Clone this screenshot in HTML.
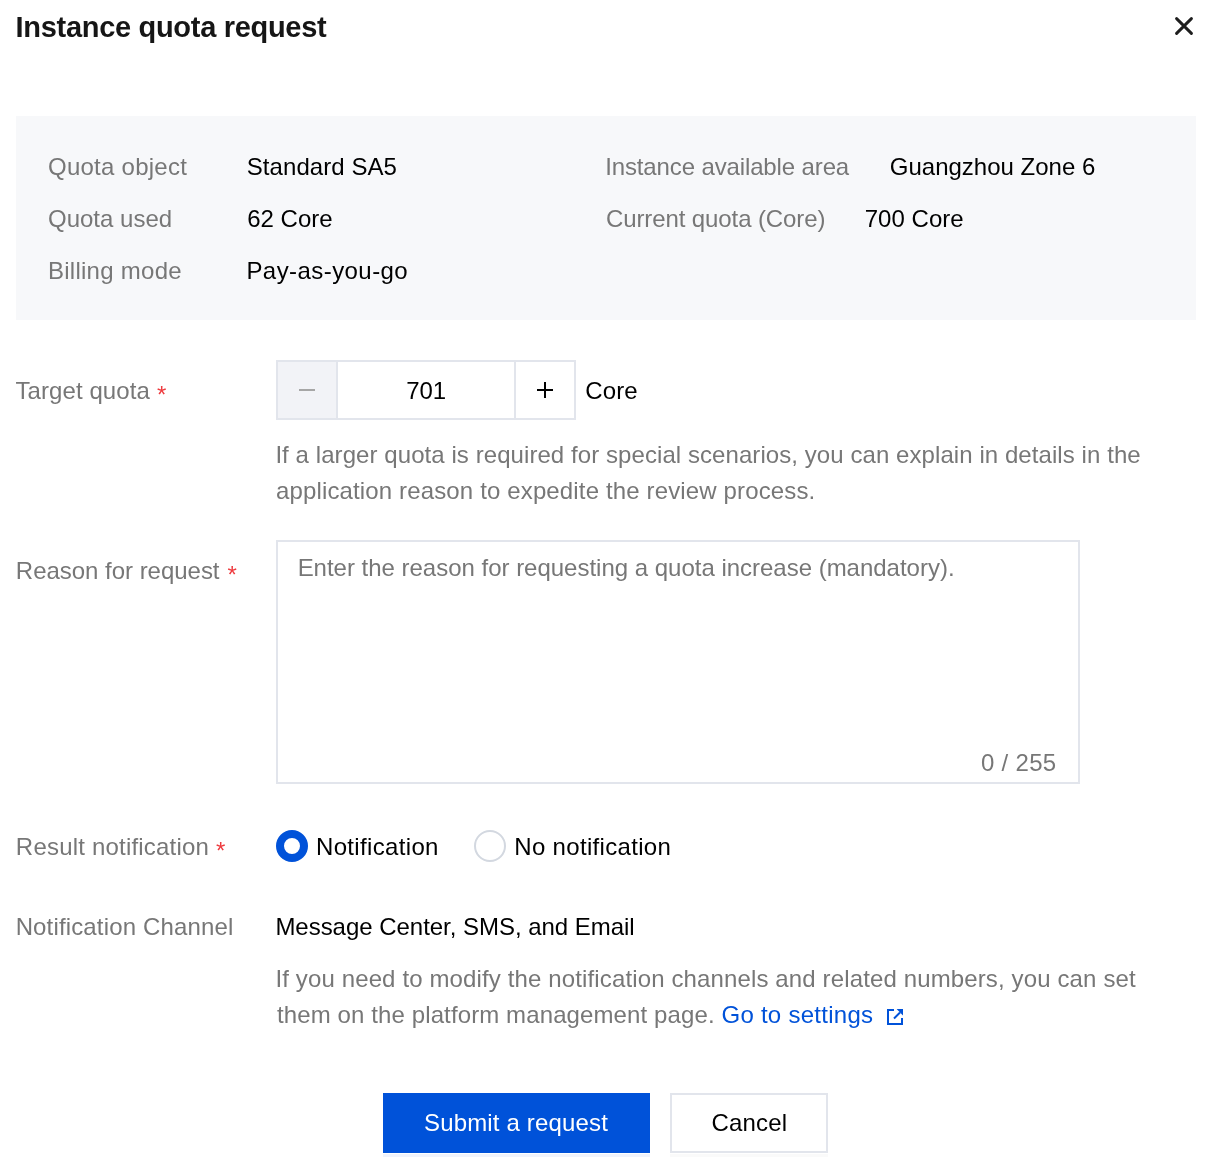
<!DOCTYPE html>
<html>
<head>
<meta charset="utf-8">
<style>
html,body{margin:0;padding:0;background:#fff;}
body{width:1214px;height:1168px;position:relative;overflow:hidden;font-family:"Liberation Sans",sans-serif;font-size:24px;line-height:24px;color:#000;}
#root{position:absolute;left:0;top:0;width:1214px;height:1168px;will-change:transform;}
.a{position:absolute;white-space:nowrap;}
.lbl{color:#777777;}
.val{color:#000;}
.link{color:#0052D9;}
.btn{color:#fff;}
.ast{color:#EE3B3F;font-size:24px;line-height:24px;}
.title{font-weight:bold;font-size:29px;line-height:28px;color:#161616;}
.box{position:absolute;box-sizing:border-box;}
</style>
</head>
<body><div id="root">
<div id="title" class="a title" style="left:15.56px;top:13px;letter-spacing:-0.302px;">Instance quota request</div>
<svg class="a" style="left:1175px;top:17px;" width="18" height="18" viewBox="0 0 18 18"><path d="M1.6 1.6L16.4 16.4M16.4 1.6L1.6 16.4" stroke="#1E1E1E" stroke-width="2.9" stroke-linecap="round"/></svg>
<div class="box" style="left:16px;top:116px;width:1180px;height:204px;background:#F7F8FA;"></div>
<div id="quota_obj" class="a lbl" style="left:48.00px;top:155px;letter-spacing:0.250px;">Quota object</div>
<div id="standard" class="a val" style="left:246.79px;top:155px;letter-spacing:0.067px;">Standard SA5</div>
<div id="quota_used" class="a lbl" style="left:48.00px;top:207px;letter-spacing:0.000px;">Quota used</div>
<div id="62core" class="a val" style="left:247.24px;top:207px;letter-spacing:0.000px;">62 Core</div>
<div id="billing" class="a lbl" style="left:47.90px;top:259px;letter-spacing:0.274px;">Billing mode</div>
<div id="payg" class="a val" style="left:246.42px;top:259px;letter-spacing:0.435px;">Pay-as-you-go</div>
<div id="inst_area" class="a lbl" style="left:605.19px;top:155px;letter-spacing:-0.128px;">Instance available area</div>
<div id="guangzhou" class="a val" style="left:889.76px;top:155px;letter-spacing:0.004px;">Guangzhou Zone 6</div>
<div id="cur_quota" class="a lbl" style="left:606.00px;top:207px;letter-spacing:-0.105px;">Current quota (Core)</div>
<div id="700core" class="a val" style="left:864.64px;top:207px;letter-spacing:0.051px;">700 Core</div>
<div id="target_q" class="a lbl" style="left:15.48px;top:379px;letter-spacing:0.077px;">Target quota</div>
<div id="ast1" class="a ast" style="left:157px;top:383px;">*</div>
<div class="box" style="left:276px;top:360px;width:300px;height:60px;border:2px solid #E2E5EC;background:#fff;"></div>
<div class="box" style="left:278px;top:362px;width:58px;height:56px;background:#F2F3F7;"></div>
<div class="box" style="left:336px;top:362px;width:2px;height:56px;background:#E2E5EC;"></div>
<div class="box" style="left:514px;top:362px;width:2px;height:56px;background:#E2E5EC;"></div>
<div class="box" style="left:299px;top:389px;width:16px;height:2px;background:#A6A6A6;"></div>
<div class="box" style="left:537px;top:389px;width:16px;height:2px;background:#000;"></div>
<div class="box" style="left:544px;top:382px;width:2px;height:16px;background:#000;"></div>
<div id="701" class="a val" style="left:406.18px;top:379px;letter-spacing:0.000px;">701</div>
<div id="core" class="a val" style="left:585.36px;top:379px;letter-spacing:0.063px;">Core</div>
<div id="help1" class="a lbl" style="left:275.38px;top:443px;letter-spacing:0.072px;">If a larger quota is required for special scenarios, you can explain in details in the</div>
<div id="help2" class="a lbl" style="left:276.00px;top:479px;letter-spacing:0.141px;">application reason to expedite the review process.</div>
<div id="reason" class="a lbl" style="left:15.86px;top:559px;letter-spacing:-0.026px;">Reason for request</div>
<div id="ast2" class="a ast" style="left:227.5px;top:563px;">*</div>
<div class="box" style="left:276px;top:540px;width:804px;height:244px;border:2px solid #E2E5EC;background:#fff;"></div>
<div id="placeholder" class="a lbl" style="left:297.64px;top:556px;letter-spacing:-0.013px;">Enter the reason for requesting a quota increase (mandatory).</div>
<div id="count" class="a lbl" style="left:981.00px;top:751px;letter-spacing:0.289px;">0 / 255</div>
<div id="result" class="a lbl" style="left:15.86px;top:835px;letter-spacing:0.196px;">Result notification</div>
<div id="ast3" class="a ast" style="left:216px;top:839px;">*</div>
<div class="box" style="left:276px;top:830px;width:32px;height:32px;border:8px solid #0052D9;border-radius:50%;background:#fff;"></div>
<div id="notif" class="a val" style="left:316.01px;top:835px;letter-spacing:0.336px;">Notification</div>
<div class="box" style="left:474px;top:830px;width:32px;height:32px;border:2px solid #D3D8E0;border-radius:50%;background:#fff;"></div>
<div id="nonotif" class="a val" style="left:514.24px;top:835px;letter-spacing:0.322px;">No notification</div>
<div id="channel" class="a lbl" style="left:15.64px;top:915px;letter-spacing:0.149px;">Notification Channel</div>
<div id="message" class="a val" style="left:275.42px;top:915px;letter-spacing:-0.031px;">Message Center, SMS, and Email</div>
<div id="help3" class="a lbl" style="left:275.38px;top:967px;letter-spacing:0.132px;">If you need to modify the notification channels and related numbers, you can set</div>
<div id="help4" class="a lbl" style="left:277.00px;top:1003px;letter-spacing:0.111px;">them on the platform management page.</div>
<div id="link" class="a link" style="left:721.45px;top:1003px;letter-spacing:0.270px;">Go to settings</div>
<svg class="a" style="left:887px;top:1009px;" width="16" height="16" viewBox="0 0 16 16"><path d="M7 1H1V15H15V9" fill="none" stroke="#0052D9" stroke-width="2"/><path d="M9.6 0H16V6.4Z" fill="#0052D9"/><path d="M7 9.5L13 3.5" stroke="#0052D9" stroke-width="2"/></svg>
<div class="box" style="left:383px;top:1154px;width:267px;height:3px;background:#EFF3FC;"></div>
<div class="box" style="left:670px;top:1154px;width:158px;height:3px;background:#FAFAFA;"></div>
<div class="box" style="left:383px;top:1093px;width:267px;height:60px;background:#0052D9;"></div>
<div id="submit" class="a btn" style="left:424.00px;top:1111px;letter-spacing:0.166px;">Submit a request</div>
<div class="box" style="left:670px;top:1093px;width:158px;height:60px;border:2px solid #E2E5EC;background:#fff;"></div>
<div id="cancel" class="a val" style="left:711.53px;top:1111px;letter-spacing:0.154px;">Cancel</div>
</div></body>
</html>
